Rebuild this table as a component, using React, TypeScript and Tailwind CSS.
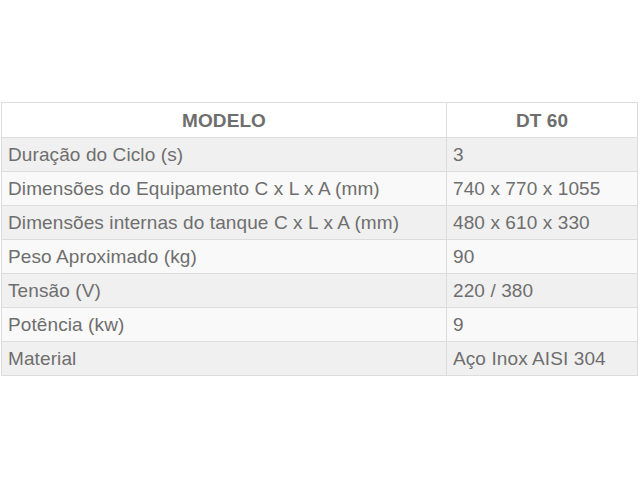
import React from 'react';

const rows: [string, string][] = [
  ['Duração do Ciclo (s)', '3'],
  ['Dimensões do Equipamento C x L x A (mm)', '740 x 770 x 1055'],
  ['Dimensões internas do tanque C x L x A (mm)', '480 x 610 x 330'],
  ['Peso Aproximado (kg)', '90'],
  ['Tensão (V)', '220 / 380'],
  ['Potência (kw)', '9'],
  ['Material', 'Aço Inox AISI 304'],
];

const App = () => {
  return (
    <div className="w-[640px] h-[480px] bg-white pt-[102px] pl-[1px] font-['Liberation_Sans',Arial,sans-serif] text-[19px] tracking-[0.1px] text-[#6e6e6e]">
      <table className="w-[637px] border-collapse table-fixed">
        <colgroup>
          <col className="w-[445px]" />
          <col />
        </colgroup>
        <thead>
          <tr className="h-[35px] bg-white">
            <th className="border border-[#dcdcdc] pt-[2px] font-bold text-center">MODELO</th>
            <th className="border border-[#dcdcdc] pt-[2px] font-bold text-center">DT 60</th>
          </tr>
        </thead>
        <tbody>
          {rows.map(([label, value], i) => (
            <tr key={label} className={i % 2 === 0 ? 'h-[34px] bg-[#f0f0f0]' : 'h-[34px] bg-[#f9f9f9]'}>
              <td className="border border-[#dcdcdc] px-[6px] pt-[2px] font-normal">{label}</td>
              <td className="border border-[#dcdcdc] px-[6px] pt-[2px] font-normal">{value}</td>
            </tr>
          ))}
        </tbody>
      </table>
    </div>
  );
};

export default App;
